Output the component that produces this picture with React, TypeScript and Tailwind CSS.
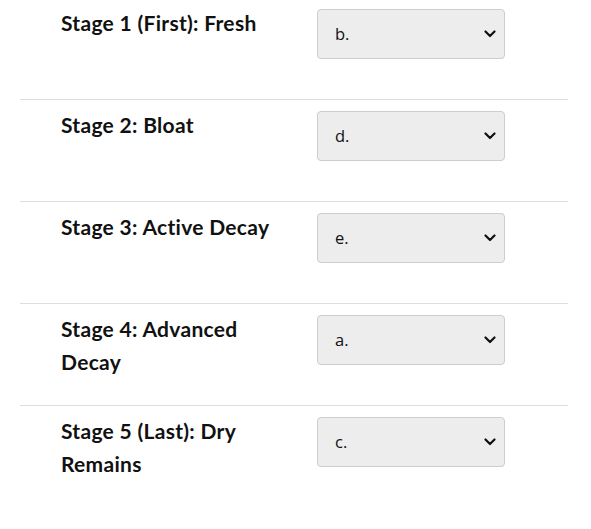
const stages = [
  { label: "Stage 1 (First): Fresh", value: "b." },
  { label: "Stage 2: Bloat", value: "d." },
  { label: "Stage 3: Active Decay", value: "e." },
  { label: "Stage 4: Advanced Decay", value: "a." },
  { label: "Stage 5 (Last): Dry Remains", value: "c." },
];

function Chevron() {
  return (
    <svg width="12" height="8" viewBox="0 0 12 8" fill="none">
      <path
        d="M1.5 1.5 L6 6 L10.5 1.5"
        stroke="#111"
        strokeWidth="2.2"
        strokeLinecap="round"
        strokeLinejoin="round"
      />
    </svg>
  );
}

export default function App() {
  return (
    <div className="w-[591px] h-[529px] bg-white overflow-hidden">
      <div className="ml-[20px] w-[548px]">
        { stages.map((stage, index) => (
          <div
            key={ index }
            className={
              index === 0
                ? "flex h-[100px] pt-[6px] pl-[41px] border-b border-[#dedede]"
                : index === stages.length - 1
                  ? "flex h-[102px] pt-[8px] pl-[41px]"
                  : "flex h-[102px] pt-[8px] pl-[41px] border-b border-[#dedede]"
            }
          >
            <div className="w-[256px] pr-[28px] font-['Lato','Noto_Sans',sans-serif] font-bold text-[21px] tracking-[0.3px] leading-[33px] text-[#111]">
              { stage.label }
            </div>
            <div className="mt-[3px] w-[188px] h-[50px] flex items-center justify-between pl-[17px] pr-[8px] bg-[#ededed] border border-[#cdcdcd] rounded-[4px] font-['Open_Sans','Liberation_Sans',sans-serif] text-[16.5px] text-[#111]">
              <span>{ stage.value }</span>
              <Chevron />
            </div>
          </div>
        )) }
      </div>
    </div>
  );
}
